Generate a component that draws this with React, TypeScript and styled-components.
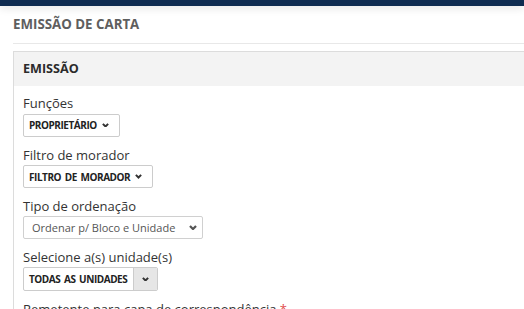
import styled, { createGlobalStyle } from "styled-components";

const GlobalStyle = createGlobalStyle`
  html, body {
    margin: 0;
    padding: 0;
    background: #fff;
    overflow: hidden;
  }
  body {
    font-family: "Open Sans", "Liberation Sans", sans-serif;
    color: #333;
  }
`;

const TopBar = styled.div`
  height: 6px;
  background: #0f2c51;
  box-shadow: 0 2px 8px rgba(0, 0, 0, 0.12);
  position: relative;
`;

const Page = styled.div`
  padding-left: 13px;
  overflow: hidden;
`;

const TitleBar = styled.div`
  padding: 8px 0 9px;
  border-bottom: 1px solid #e8e8e8;
`;

const Title = styled.h1`
  margin: 0;
  font-size: 13.3px;
  line-height: 20px;
  font-weight: 700;
  color: #5e5e5e;
`;

const Panel = styled.section`
  margin: 7px -20px 0 0;
  border: 1px solid #dcdcdc;
  border-right: none;
`;

const PanelHeader = styled.div`
  height: 34px;
  display: flex;
  align-items: center;
  padding-left: 9px;
  background: #f3f3f3;
`;

const PanelTitle = styled.h2`
  margin: 0;
  font-size: 12.6px;
  line-height: 18px;
  font-weight: 700;
  color: #2b2b2b;
`;

const PanelBody = styled.div`
  padding: 8px 9px 0;
`;

const Field = styled.div`
  margin-bottom: 9px;
`;

const Label = styled.label`
  display: block;
  font-size: 13px;
  line-height: 18px;
  color: #333;
`;

const Required = styled.span`
  color: #e04b4b;
`;

const Select = styled.div<{ $plain?: boolean; $width?: number }>`
  display: inline-flex;
  align-items: center;
  justify-content: space-between;
  gap: 5px;
  box-sizing: border-box;
  height: 23px;
  width: ${(p) => (p.$width ? `${p.$width}px` : "auto")};
  padding: ${(p) => (p.$plain ? "0 5px 0 8px" : "0 10px 0 5px")};
  border: 1px solid ${(p) => (p.$plain ? "#d0d0d0" : "#cccccc")};
  border-radius: 2px;
  background: #fff;
  font-size: ${(p) => (p.$plain ? "11px" : "10px")};
  font-weight: ${(p) => (p.$plain ? 400 : 700)};
  letter-spacing: ${(p) => (p.$plain ? "0" : "-0.45px")};
  word-spacing: ${(p) => (p.$plain ? "0" : "1.5px")};
  color: ${(p) => (p.$plain ? "#555" : "#222")};
  white-space: nowrap;
`;

const InputGroup = styled.div`
  display: inline-flex;
  height: 22px;
  border: 1px solid #cccccc;
  border-radius: 2px;
  overflow: hidden;
`;

const GroupValue = styled.div`
  display: flex;
  align-items: center;
  width: 104px;
  padding-left: 5px;
  font-size: 10px;
  font-weight: 700;
  letter-spacing: -0.45px;
  word-spacing: 1.5px;
  color: #222;
  white-space: nowrap;
`;

const GroupAddon = styled.div`
  display: flex;
  align-items: center;
  justify-content: center;
  width: 23px;
  background: #e6e6e6;
  border-left: 1px solid #cccccc;
`;

function Chevron({ color = "#333", size = 7 }: { color?: string; size?: number }) {
  return (
    <svg
      width={size}
      height={size * 0.7}
      viewBox="0 0 7 5"
      style={{ flex: "none" }}
    >
      <polyline
        points="0.8,0.9 3.5,3.6 6.2,0.9"
        fill="none"
        stroke={color}
        strokeWidth="2"
      />
    </svg>
  );
}

export default function App() {
  return (
    <>
      <GlobalStyle />
      <TopBar />
      <Page>
        <TitleBar>
          <Title>EMISSÃO DE CARTA</Title>
        </TitleBar>
        <Panel>
          <PanelHeader>
            <PanelTitle>EMISSÃO</PanelTitle>
          </PanelHeader>
          <PanelBody>
            <Field>
              <Label>Funções</Label>
              <Select>
                PROPRIETÁRIO <Chevron />
              </Select>
            </Field>
            <Field>
              <Label>Filtro de morador</Label>
              <Select>
                FILTRO DE MORADOR <Chevron />
              </Select>
            </Field>
            <Field>
              <Label>Tipo de ordenação</Label>
              <Select $plain $width={180}>
                Ordenar p/ Bloco e Unidade <Chevron color="#555" size={8} />
              </Select>
            </Field>
            <Field>
              <Label>Selecione a(s) unidade(s)</Label>
              <InputGroup>
                <GroupValue>TODAS AS UNIDADES</GroupValue>
                <GroupAddon>
                  <Chevron />
                </GroupAddon>
              </InputGroup>
            </Field>
            <Field>
              <Label>
                Remetente para capa de correspondência <Required>*</Required>
              </Label>
            </Field>
          </PanelBody>
        </Panel>
      </Page>
    </>
  );
}
